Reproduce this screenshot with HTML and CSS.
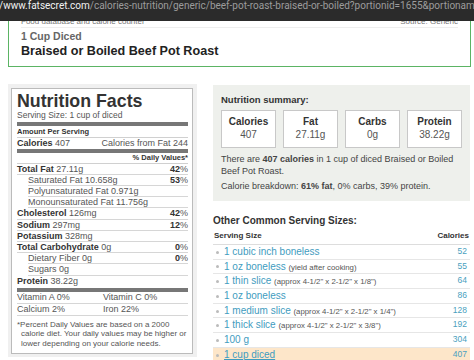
FILE: index.html
```html
<!DOCTYPE html>
<html lang="en">
    <head>
        <meta charset="UTF-8" />
        <meta name="viewport" content="width=device-width, initial-scale=1.0" />
        <title>Braised or Boiled Beef Pot Roast - Nutrition Facts</title>
        <link rel="stylesheet" href="styles.css">
    </head>
    <body>
        <div class="urlbar"><span class="url-host">/www.fatsecret.com</span>/calories-nutrition/generic/beef-pot-roast-braised-or-boiled?portionid=1655&amp;portionamount=1.000</div>

        <div class="food-header">
            <div class="food-source">
                <span>Food database and calorie counter</span>
                <span>Source: Generic</span>
            </div>
            <div class="food-portion">1 Cup Diced</div>
            <h1 class="food-name">Braised or Boiled Beef Pot Roast</h1>
        </div>

        <div class="main">
            <!-- Label nutrisi -->
            <div class="facts-wrap">
                <div class="facts">
                    <div class="nf-title">Nutrition Facts</div>
                    <div class="nf-serving">Serving Size: 1 cup of diced</div>
                    <div class="nf-head">Amount Per Serving</div>
                    <div class="nf-row nf-cal">
                        <span><b>Calories</b> 407</span>
                        <span>Calories from Fat 244</span>
                    </div>
                    <div class="nf-head nf-dv">% Daily Values*</div>
                    <div class="nf-row"><span><b>Total Fat</b> 27.11g</span><span><b>42</b>%</span></div>
                    <div class="nf-row sub"><span>Saturated Fat 10.658g</span><span><b>53</b>%</span></div>
                    <div class="nf-row sub"><span>Polyunsaturated Fat 0.971g</span></div>
                    <div class="nf-row sub"><span>Monounsaturated Fat 11.756g</span></div>
                    <div class="nf-row"><span><b>Cholesterol</b> 126mg</span><span><b>42</b>%</span></div>
                    <div class="nf-row"><span><b>Sodium</b> 297mg</span><span><b>12</b>%</span></div>
                    <div class="nf-row"><span><b>Potassium</b> 328mg</span></div>
                    <div class="nf-row"><span><b>Total Carbohydrate</b> 0g</span><span><b>0</b>%</span></div>
                    <div class="nf-row sub"><span>Dietary Fiber 0g</span><span><b>0</b>%</span></div>
                    <div class="nf-row sub"><span>Sugars 0g</span></div>
                    <div class="nf-row nf-protein"><span><b>Protein</b> 38.22g</span></div>
                    <div class="nf-vit"><span>Vitamin A 0%</span><span>Vitamin C 0%</span></div>
                    <div class="nf-vit"><span>Calcium 2%</span><span>Iron 22%</span></div>
                    <p class="nf-note">*Percent Daily Values are based on a 2000 calorie diet. Your daily values may be higher or lower depending on your calorie needs.</p>
                </div>
            </div>

            <div class="side">
                <div class="summary">
                    <div class="summary-title">Nutrition summary:</div>
                    <div class="summary-boxes">
                        <div class="sbox"><b>Calories</b><span>407</span></div>
                        <div class="sbox"><b>Fat</b><span>27.11g</span></div>
                        <div class="sbox"><b>Carbs</b><span>0g</span></div>
                        <div class="sbox"><b>Protein</b><span>38.22g</span></div>
                    </div>
                    <p>There are <b>407 calories</b> in 1 cup of diced Braised or Boiled Beef Pot Roast.</p>
                    <p class="breakdown">Calorie breakdown: <b>61% fat</b>, 0% carbs, 39% protein.</p>
                </div>

                <div class="serving-title">Other Common Serving Sizes:</div>
                <table class="servings">
                    <tr>
                        <th>Serving Size</th>
                        <th class="cal">Calories</th>
                    </tr>
                    <tr>
                        <td class="item"><span class="dot"></span><a href="#">1 cubic inch boneless</a></td>
                        <td class="cal">52</td>
                    </tr>
                    <tr>
                        <td class="item"><span class="dot"></span><a href="#">1 oz boneless</a> <span class="note">(yield after cooking)</span></td>
                        <td class="cal">55</td>
                    </tr>
                    <tr>
                        <td class="item"><span class="dot"></span><a href="#">1 thin slice</a> <span class="note">(approx 4-1/2" x 2-1/2" x 1/8")</span></td>
                        <td class="cal">64</td>
                    </tr>
                    <tr>
                        <td class="item"><span class="dot"></span><a href="#">1 oz boneless</a></td>
                        <td class="cal">86</td>
                    </tr>
                    <tr>
                        <td class="item"><span class="dot"></span><a href="#">1 medium slice</a> <span class="note">(approx 4-1/2" x 2-1/2" x 1/4")</span></td>
                        <td class="cal">128</td>
                    </tr>
                    <tr>
                        <td class="item"><span class="dot"></span><a href="#">1 thick slice</a> <span class="note">(approx 4-1/2" x 2-1/2" x 3/8")</span></td>
                        <td class="cal">192</td>
                    </tr>
                    <tr>
                        <td class="item"><span class="dot"></span><a href="#">100 g</a></td>
                        <td class="cal">304</td>
                    </tr>
                    <tr class="current">
                        <td class="item"><span class="dot"></span><a href="#">1 cup diced</a></td>
                        <td class="cal">407</td>
                    </tr>
                </table>
            </div>
        </div>
    </body>
</html>
```

FILE: styles.css
```css
/* Reset */
* {
    box-sizing: border-box;
    margin: 0;
    padding: 0;
}

body {
    font-family: "Liberation Sans", Arial, sans-serif;
    background-color: #fff;
    color: #333;
    width: 474px;
    height: 360px;
    overflow: hidden;
}

/* Bar alamat di atas */
.urlbar {
    position: absolute;
    top: 0;
    left: 0;
    right: 0;
    height: 21px;
    background-color: #2b2b2b;
    color: #9c9c9c;
    font-family: Roboto, sans-serif;
    font-size: 10px;
    line-height: 12px;
    white-space: nowrap;
    overflow: hidden;
    text-indent: -1px;
    z-index: 1;
}

.url-host {
    color: #f2f2f2;
}

/* Header makanan */
.food-header {
    margin: 8px 3px 0 8px;
    border: 1px solid #5bb464;
    padding: 0 12px 7px;
}

.food-source {
    display: flex;
    justify-content: space-between;
    font-size: 8px;
    line-height: 10px;
    color: #777;
    padding-top: 8px;
    border-bottom: 1px solid #eee;
}

.food-portion {
    margin-top: 2px;
    font-size: 10.5px;
    line-height: 13px;
    font-weight: bold;
    color: #666;
}

.food-name {
    font-size: 12.6px;
    line-height: 16px;
    color: #222;
}

.main {
    display: grid;
    grid-template-columns: 189px 257px;
    column-gap: 16px;
    align-items: start;
    margin: 17px 0 0 8px;
}

/* Nutrition facts */
.facts-wrap {
    background-color: #f0f0f0;
    padding: 4px 4px 3px 3px;
}

.facts {
    background-color: #fff;
    border: 1px solid #bbb;
    padding: 3px 4px 5px 5px;
    color: #555;
}

.nf-title {
    font-size: 17.8px;
    line-height: 18px;
    font-weight: bold;
    color: #333;
}

.nf-serving {
    font-size: 8.5px;
    line-height: 10px;
    padding-bottom: 1.5px;
    border-bottom: 4px solid #777;
}

.nf-head {
    font-size: 7.5px;
    line-height: 10px;
    font-weight: bold;
    color: #333;
    padding-top: 1px;
    border-bottom: 1px solid #d0d0d0;
}

.nf-dv {
    text-align: right;
    padding-top: 0;
}

.nf-row {
    display: flex;
    justify-content: space-between;
    font-size: 9px;
    line-height: 10.2px;
    border-bottom: 1px solid #d6d6d6;
}

.nf-row b {
    color: #333;
}

.nf-row.sub {
    margin-left: 11px;
}

.nf-cal {
    line-height: 10px;
    padding-bottom: 1px;
    border-bottom: 4px solid #777;
}

.nf-protein {
    padding-bottom: 2px;
    border-bottom: 4px solid #777;
}

.nf-vit {
    display: grid;
    grid-template-columns: 86px 1fr;
    font-size: 9px;
    line-height: 11px;
    border-bottom: 1px solid #d6d6d6;
}

.nf-note {
    margin-top: 4.4px;
    font-size: 8px;
    line-height: 9.2px;
    padding-left: 4px;
    text-indent: -4px;
}

/* Ringkasan */
.side {
    margin-top: 1px;
}

.summary {
    background-color: #eef0ec;
    padding: 8px 8px 8.5px;
}

.summary-title {
    font-size: 9.5px;
    line-height: 14px;
    font-weight: bold;
}

.summary-boxes {
    display: grid;
    grid-template-columns: repeat(4, 1fr);
    gap: 7px;
    margin-top: 3px;
}

.sbox {
    display: flex;
    flex-direction: column;
    background-color: #fff;
    border: 1px solid #c8c8c8;
    text-align: center;
    padding: 4px 0 6px;
    font-size: 10px;
    line-height: 13px;
    color: #555;
}

.sbox b {
    color: #333;
}

.summary p {
    margin-top: 6px;
    font-size: 9px;
    line-height: 11.7px;
    color: #444;
}

.summary p.breakdown {
    margin-top: 3.3px;
}

/* Tabel porsi */
.serving-title {
    margin-top: 14px;
    font-size: 10px;
    line-height: 12px;
    font-weight: bold;
}

.servings {
    width: 100%;
    border-collapse: collapse;
}

.servings th {
    font-size: 8px;
    line-height: 12px;
    text-align: left;
    padding: 3px 1px 2px;
    border-bottom: 1px solid #ddd;
}

.servings th.cal {
    text-align: right;
}

.servings td {
    font-size: 10px;
    line-height: 13.7px;
    border-bottom: 1px solid #e6e6e6;
    white-space: nowrap;
}

.servings td.item {
    padding-left: 3px;
}

.servings td.cal {
    text-align: right;
    font-size: 8.5px;
    color: #4a9fc0;
    padding-right: 3px;
}

.dot {
    display: inline-block;
    width: 3px;
    height: 3px;
    border-radius: 50%;
    background-color: #bbb;
    margin-right: 5px;
    vertical-align: middle;
}

.servings a {
    color: #3f9cc0;
    text-decoration: none;
}

.note {
    font-size: 7.8px;
    line-height: 10px;
    color: #555;
}

.servings tr.current td {
    background-color: #fde6c9;
}

.servings tr.current a {
    text-decoration: underline;
}
```
